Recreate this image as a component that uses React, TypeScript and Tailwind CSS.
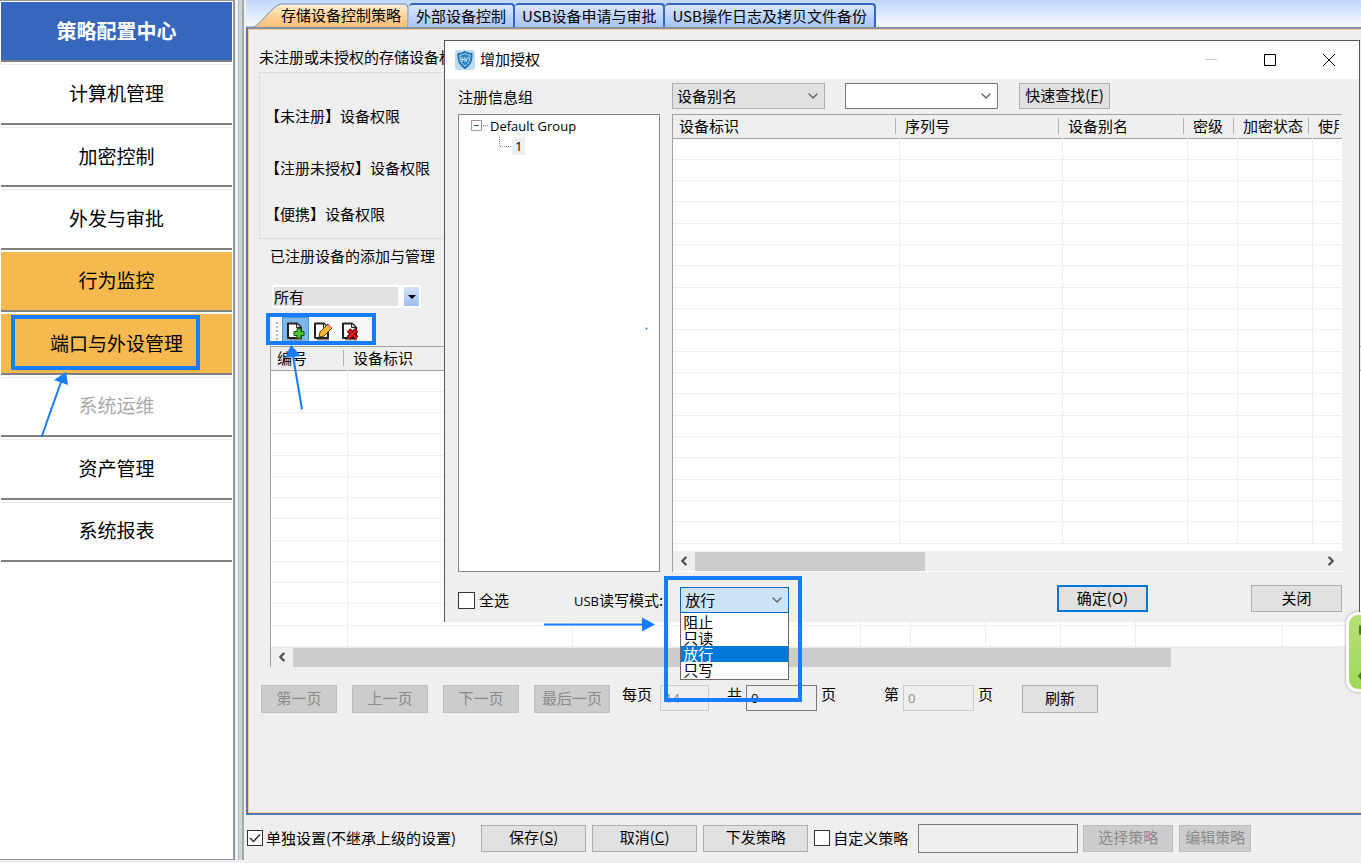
import { useState } from 'react'
import type { ReactNode } from 'react'
import clsx from 'clsx'
import { ChevronDown, ChevronLeft, ChevronRight } from 'lucide-react'

const menu = [
  { label: '计算机管理' },
  { label: '加密控制' },
  { label: '外发与审批' },
  { label: '行为监控', active: true },
  { label: '端口与外设管理', active: true },
  { label: '系统运维', disabled: true },
  { label: '资产管理' },
  { label: '系统报表' },
]

const tabs = ['外部设备控制', 'USB设备申请与审批', 'USB操作日志及拷贝文件备份']

const modes = ['阻止', '只读', '放行', '只写']

interface Column {
  label: string
  width: string
}

const deviceColumns: Column[] = [
  { label: '编号', width: 'w-[76px]' },
  { label: '设备标识', width: 'w-[225px]' },
  { label: '', width: 'w-[288px]' },
  { label: '', width: 'w-[50px]' },
  { label: '', width: 'w-[75px]' },
  { label: '', width: 'w-[75px]' },
  { label: '', width: 'w-[75px]' },
  { label: '', width: 'w-[147px]' },
  { label: '', width: '' },
]

const authColumns: Column[] = [
  { label: '设备标识', width: 'w-[226px]' },
  { label: '序列号', width: 'w-[163px]' },
  { label: '设备别名', width: 'w-[125px]' },
  { label: '密级', width: 'w-[50px]' },
  { label: '加密状态', width: 'w-[75px]' },
  { label: '使用', width: '' },
]

function GridTable({ columns, rows, height, label }: { columns: Column[]; rows: number; height: string; label: string }) {
  return (
    <table aria-label={label} className={clsx('w-full table-fixed border-collapse bg-white', height)}>
      <thead>
        <tr className="h-[23px] border-b border-[#a0a0a0] bg-[#efefef]">
          {columns.map((col, i) => (
            <th key={i} className={clsx('p-0 text-left font-normal', col.width)}>
              <div
                className={clsx(
                  'mr-[3px] h-4 overflow-x-clip pl-[6px] leading-4 whitespace-nowrap',
                  i < columns.length - 1 && 'border-r border-[#b0b0b0]',
                )}
              >
                {col.label}
              </div>
            </th>
          ))}
        </tr>
      </thead>
      <tbody>
        {Array.from({ length: rows }, (_, r) => (
          <tr key={r} className="border-b border-[#ededed]">
            {columns.map((_, c) => (
              <td key={c} className="border-r border-[#ededed] p-0 last:border-r-0" />
            ))}
          </tr>
        ))}
      </tbody>
    </table>
  )
}

function ScrollBar({ thumb, end }: { thumb: string; end?: boolean }) {
  return (
    <div className="flex h-5 items-center bg-[#efefef] text-[#505050]">
      <button aria-label="向左滚动" className="flex w-[22px] justify-center">
        <ChevronLeft className="h-[14px] w-[14px]" strokeWidth={4} />
      </button>
      <div className={clsx('h-[19px] bg-[#cccccc]', thumb)} />
      {end && (
        <button aria-label="向右滚动" className="ml-auto flex w-[22px] justify-center">
          <ChevronRight className="h-[14px] w-[14px]" strokeWidth={4} />
        </button>
      )}
    </div>
  )
}

function Button({ children, className, disabled }: { children: ReactNode; className?: string; disabled?: boolean }) {
  return (
    <button
      disabled={disabled}
      className={clsx(
        'shrink-0 border pb-[2px] text-center leading-[22px] whitespace-nowrap',
        disabled ? 'border-[#bfbfbf] bg-[#cccccc] text-[#8a8a8a]' : 'border-[#adadad] bg-[#e1e1e1]',
        className,
      )}
    >
      {children}
    </button>
  )
}

function Combo({ label, value, className }: { label: string; value: string; className: string }) {
  return (
    <div className="relative">
      <select
        aria-label={label}
        defaultValue={value}
        className={clsx('block h-[26px] appearance-none border pl-1 leading-[22px] outline-none', className)}
      >
        <option>{value}</option>
      </select>
      <ChevronDown className="pointer-events-none absolute top-[5px] right-1 h-4 w-4 text-[#606060]" strokeWidth={2} />
    </div>
  )
}

function PageIcon({ children }: { children: ReactNode }) {
  return (
    <svg viewBox="0 0 20 20" className="h-5 w-5">
      <path d="M4 18.500h12" stroke="#8a8a8a" strokeWidth="2" />
      <path d="M2 2.500h9l4 4v10.500h-13z" fill="#fff" stroke="#222" strokeWidth="2" strokeLinejoin="round" />
      <path d="M10.500 2.500v4h4" fill="#ddd" stroke="#222" />
      {children}
    </svg>
  )
}

function Sidebar() {
  return (
    <aside className="mb-[3px] w-[235px] shrink-0 border-t border-r-2 border-b border-[#8f94a2] bg-white pl-px">
      <ul className="flex h-[561px] flex-col pr-px text-[19px]">
        <li className="flex flex-1 border-b-2 border-[#808080] pt-px">
          <h1 className="flex w-full items-center justify-center bg-[#3766bd] text-xl font-bold text-white">策略配置中心</h1>
        </li>
        {menu.map((item) => (
          <li key={item.label} className="flex flex-1 border-b-2 border-[#808080] pt-[2px]">
            <button
              disabled={item.disabled}
              className={clsx(
                'w-full border-t pb-[2px]',
                item.active ? 'border-[#f5b94f] bg-[#f5b94f]' : 'border-[#ebebeb]',
                item.disabled && 'text-[#aaaaaa]',
              )}
            >
              {item.label}
            </button>
          </li>
        ))}
      </ul>
    </aside>
  )
}

function TabStrip() {
  return (
    <div role="tablist" className="flex h-[27px] items-end bg-linear-to-b from-[#c1d8fc] to-[#f8fbff]">
      <button role="tab" aria-selected="true" className="relative h-6 w-[163px] pl-[35px] text-left leading-6">
        <svg viewBox="0 0 163 24" className="absolute inset-0 h-full w-full">
          <defs>
            <linearGradient id="activeTab" x1="0" y1="0" x2="0" y2="1">
              <stop offset="0" stopColor="#fff0da" />
              <stop offset="0.500" stopColor="#ffd49a" />
              <stop offset="1" stopColor="#fec078" />
            </linearGradient>
          </defs>
          <path d="M0 24h8C13 22 27 4 32 2q2-1 5-1h122q3 0 3 4v19z" fill="url(#activeTab)" />
          <path d="M0 24h8C13 22 27 4 32 2q2-1 5-1h122q3 0 3 4v19" fill="none" stroke="#6c86b5" />
        </svg>
        <span className="relative">存储设备控制策略</span>
      </button>
      {tabs.map((tab) => (
        <button
          key={tab}
          role="tab"
          aria-selected="false"
          className="h-6 rounded-t-[4px] border-2 border-b-0 border-l-0 border-[#3566c4] bg-linear-to-b from-[#d8e6ff] to-[#a6c4f5] px-[7px] pb-px leading-[21px] whitespace-nowrap"
        >
          {tab}
        </button>
      ))}
    </div>
  )
}

function Toolbar() {
  return (
    <div className="ml-[13px] flex h-[27px] w-[100px] items-center bg-[#f8f8f8]">
      <div className="mx-1 h-[18px] border-l-2 border-dotted border-[#b4b4b4]" />
      <button aria-label="添加" className="flex h-[27px] w-[27px] items-center justify-center border border-[#3d9be9] bg-[#7cb7ea]">
        <PageIcon>
          <path d="M11 7.500h4v3h3v4h-3v3h-4v-3H8v-4h3z" fill="#45c22d" stroke="#14520c" />
        </PageIcon>
      </button>
      <button aria-label="编辑" className="flex h-[27px] w-[27px] items-center justify-center">
        <PageIcon>
          <path d="M6 16l1-5 8-8 4 4-8 8z" fill="#fbb829" stroke="#5a3805" />
          <path d="M15 4l3 3" stroke="#e98a8a" strokeWidth="2" />
        </PageIcon>
      </button>
      <button aria-label="删除" className="flex h-[27px] w-[30px] items-center justify-center">
        <PageIcon>
          <path d="M7.500 9l8 8m0-8l-8 8" stroke="#4a0505" strokeWidth="5" />
          <path d="M7.500 9l8 8m0-8l-8 8" stroke="#e01414" strokeWidth="3" />
        </PageIcon>
      </button>
    </div>
  )
}

function Pager() {
  const field = 'h-[26px] border px-1 font-[Open_Sans] text-[13px]'
  return (
    <div className="mt-[18px] ml-[2px] flex items-start leading-[18px]">
      <div className="flex gap-[15px]">
        {['第一页', '上一页', '下一页', '最后一页'].map((text) => (
          <Button key={text} disabled className="h-7 w-[76px]">
            {text}
          </Button>
        ))}
      </div>
      <label htmlFor="pageSize" className="ml-3">每页</label>
      <input id="pageSize" disabled defaultValue="14" className={clsx(field, 'ml-2 w-[49px] border-[#cccccc] text-[#8a8a8a]')} />
      <label htmlFor="pageTotal" className="ml-[18px]">共</label>
      <input id="pageTotal" readOnly defaultValue="0" className={clsx(field, 'ml-1 w-[71px] border-[#7a7a7a]')} />
      <span className="ml-1">页</span>
      <label htmlFor="pageNumber" className="ml-12">第</label>
      <input id="pageNumber" disabled defaultValue="0" className={clsx(field, 'ml-1 w-[71px] border-[#cccccc] text-[#8a8a8a]')} />
      <span className="ml-1">页</span>
      <Button className="ml-[29px] h-7 w-[76px]">刷新</Button>
    </div>
  )
}

function Footer() {
  return (
    <footer className="flex h-12 shrink-0 items-center pb-[2px]">
      <label className="flex items-center gap-[3px] whitespace-nowrap">
        <span className="relative ml-px flex">
          <input type="checkbox" defaultChecked className="peer h-4 w-4 appearance-none border border-[#333] bg-white" />
          <svg viewBox="0 0 16 16" className="pointer-events-none absolute inset-0 hidden h-4 w-4 peer-checked:block">
            <path d="M3 8l3.500 3.500L13 4.500" fill="none" stroke="#333" strokeWidth="1.500" />
          </svg>
        </span>
        单独设置(不继承上级的设置)
      </label>
      <div className="ml-[25px] flex gap-[6px]">
        <Button className="h-[27px] w-[105px]">保存(<u>S</u>)</Button>
        <Button className="h-[27px] w-[105px]">取消(<u>C</u>)</Button>
        <Button className="h-[27px] w-[105px]">下发策略</Button>
      </div>
      <label className="ml-[6px] flex items-center gap-[3px] whitespace-nowrap">
        <input type="checkbox" className="h-4 w-4 appearance-none border border-[#333] bg-white" />
        自定义策略
      </label>
      <input aria-label="自定义策略名称" readOnly className="mr-[5px] ml-[10px] h-[29px] w-[160px] border border-[#7a7a7a]" />
      <Button disabled className="mr-[6px] h-[27px] w-[90px]">选择策略</Button>
      <Button disabled className="h-[27px] w-[72px]">编辑策略</Button>
    </footer>
  )
}

function GroupTree() {
  return (
    <ul className="h-[458px] border border-[#828790] bg-white pt-[2px] pl-3 font-[Open_Sans] text-[13px] leading-[18px]">
      <li>
        <div className="flex items-center gap-px">
          <svg viewBox="0 0 18 12" className="h-3 w-[18px]">
            <path d="M0.500 0.500h10v10h-10z" fill="#fff" stroke="#999" />
            <path d="M3 5.500h5" stroke="#3a5a9a" />
            <path d="M12 5.500h5" stroke="#888" strokeDasharray="1 1" />
          </svg>
          Default Group
        </div>
        <ul>
          <li className="flex items-center pt-[2px] pl-[28px]">
            <svg viewBox="0 0 13 18" className="h-[18px] w-[13px]">
              <path d="M0.500 0v9.500H12" fill="none" stroke="#888" strokeDasharray="1 1" />
            </svg>
            <span className="bg-[#efefef] px-[3px]">1</span>
          </li>
        </ul>
      </li>
    </ul>
  )
}

function ModeSelect({ value, onChange }: { value: string; onChange: (mode: string) => void }) {
  return (
    <div className="relative ml-[17px]">
      <select
        id="usbMode"
        value={value}
        onChange={(e) => onChange(e.target.value)}
        className="block h-[26px] w-[109px] appearance-none border border-[#0067b8] bg-[#cce4f7] pl-1 outline-none"
      >
        {modes.map((mode) => (
          <option key={mode}>{mode}</option>
        ))}
      </select>
      <ChevronDown className="pointer-events-none absolute top-[5px] right-1 h-4 w-4 text-[#606060]" strokeWidth={2} />
      <ul role="listbox" aria-label="USB读写模式" className="absolute top-[26px] left-0 w-[109px] border border-t-0 border-[#6a6a6a] bg-white pt-px pb-px">
        {modes.map((mode) => (
          <li
            key={mode}
            role="option"
            aria-selected={mode === value}
            onClick={() => onChange(mode)}
            className={clsx('h-4 pl-[2px] leading-4', mode === value && 'bg-[#0078d7] text-white')}
          >
            {mode}
          </li>
        ))}
      </ul>
    </div>
  )
}

function AuthDialog() {
  const [mode, setMode] = useState('放行')

  return (
    <section role="dialog" aria-label="增加授权" className="absolute top-10 right-px left-[444px] border border-b-0 border-[#555] bg-[#efefef]">
      <header className="flex h-[38px] items-center bg-white pl-[10px]">
        <svg viewBox="0 0 20 20" className="h-5 w-5">
          <rect width="20" height="20" rx="3" fill="#b9dcf2" />
          <path d="M10 1.500c2.500 1.500 5 2 7 2 .3 7-1.500 12-7 15-5.500-3-7.300-8-7-15 2 0 4.500-.5 7-2z" fill="#2b83c4" stroke="#1f62a5" />
          <path d="M10 3.500c1.800 1 3.500 1.400 5 1.500 0 5-1.200 8.700-5 11-3.800-2.300-5-6-5-11 1.500-.1 3.200-.5 5-1.500z" fill="none" stroke="#a9d8f5" />
          <path d="M7 7v5M7 9.500h3M10 7v5M14 7.500q-3 0-2.500 4" fill="none" stroke="#d9effc" />
        </svg>
        <h2 className="ml-[5px] pb-[2px]">增加授权</h2>
        <div className="mr-[23px] ml-auto flex gap-[45px]">
          <button aria-label="最小化" disabled>
            <svg viewBox="0 0 14 14" className="h-[14px] w-[14px]"><path d="M1 6.500h12" stroke="#ccc" /></svg>
          </button>
          <button aria-label="最大化">
            <svg viewBox="0 0 14 14" className="h-[14px] w-[14px]"><path d="M1.500 1.500h11v11h-11z" fill="none" stroke="#000" /></svg>
          </button>
          <button aria-label="关闭窗口">
            <svg viewBox="0 0 14 14" className="h-[14px] w-[14px]"><path d="M1 1l12 12M13 1L1 13" stroke="#000" /></svg>
          </button>
        </div>
      </header>

      <div className="flex gap-3 pt-1 pr-[17px] pl-[13px]">
        <div className="flex w-[202px] shrink-0 flex-col gap-[5px]">
          <h3 className="h-[26px] leading-[28px]">注册信息组</h3>
          <GroupTree />
        </div>
        <div className="flex min-w-0 flex-1 flex-col gap-[5px]">
          <div className="flex">
            <Combo label="查找字段" value="设备别名" className="w-[153px] border-[#adadad] bg-[#e1e1e1]" />
            <div className="ml-5">
              <Combo label="查找内容" value="" className="w-[153px] border-[#7a7a7a] bg-white" />
            </div>
            <Button className="ml-[21px] h-[26px] w-[91px]">快速查找(<u>F</u>)</Button>
          </div>
          <div className="flex h-[458px] flex-col border-t border-l border-[#a0a0a0] bg-white">
            <GridTable label="注册设备" columns={authColumns} rows={19} height="h-[429px]" />
            <div className="mt-auto border-b border-white">
              <ScrollBar thumb="w-[230px]" end />
            </div>
          </div>
        </div>
      </div>

      <div className="mt-[13px] flex h-[37px] items-start pr-[17px] pl-[13px]">
        <label className="mt-[2px] flex h-[26px] items-center gap-1 whitespace-nowrap">
          <input type="checkbox" className="h-[17px] w-[17px] appearance-none border border-[#333] bg-white" />
          全选
        </label>
        <div className="mt-[2px] ml-[65px] flex items-center">
          <label htmlFor="usbMode" className="whitespace-nowrap">
            <span className="font-[Open_Sans] text-[13px]">USB</span>读写模式:
          </label>
          <ModeSelect value={mode} onChange={setMode} />
        </div>
        <Button className="ml-auto h-[27px] w-[91px] border-2 border-[#0078d7]!">确定(O)</Button>
        <Button className="ml-[103px] h-[27px] w-[91px]">关闭</Button>
      </div>
    </section>
  )
}

// Blue call-outs drawn over the whole window
function Annotations() {
  return (
    <svg width="900" height="720" className="pointer-events-none absolute top-0 left-0" fill="none" stroke="#167dff">
      <rect x="13" y="317" width="185" height="51" strokeWidth="4" />
      <rect x="268" y="315" width="106" height="28" strokeWidth="4" />
      <rect x="666" y="578" width="134" height="122" strokeWidth="4" />
      <path d="M41.500 437L61 382M302 409.500L293 356M544 624.500h100" strokeWidth="2" />
      <path d="M66 372l2 13-14-5zM291 345l10 11-16 2zM655 624.500l-13 7v-14z" fill="#167dff" stroke="none" />
      <circle cx="646.500" cy="328.500" r="1" fill="#167dff" stroke="none" />
    </svg>
  )
}

function FloatingBall() {
  return (
    <div className="absolute top-[612px] right-0 h-20 w-[15px] overflow-hidden rounded-l-[12px] border-3 border-r-0 border-white bg-linear-to-b from-[#b5e077] to-[#9fd857] shadow-[0_0_3px_#888]">
      <svg viewBox="0 0 12 74" className="h-[74px] w-3">
        <path d="M10 10.500h3v9h-3zM12 57l-3 4 3 4z" fill="#3f7d1c" />
      </svg>
    </div>
  )
}

export default function App() {
  return (
    <div className="relative flex h-screen min-h-[863px] min-w-[1300px] overflow-hidden bg-[#efefef] font-['Noto_Sans_CJK_SC',sans-serif] text-[15px] leading-[22px] text-black">
      <Sidebar />
      <div className="mr-[2px] mb-[3px] ml-[3px] w-[6px] shrink-0 border-r-2 border-l border-r-[#a3a8a8] border-l-[#b7bcbc] bg-[#cbd5d5]" />

      <main className="flex min-w-0 flex-1 flex-col">
        <TabStrip />
        <div className="flex-1 border-t-2 border-b-2 border-l-2 border-t-[#8391ab] border-b-[#5577b0] border-l-[#5577b0]">
          <div className="h-full border-t border-b border-l border-[#fbc98c] pl-[10px]">
            <p className="pt-4">未注册或未授权的存储设备权限</p>
            <div className="mt-1 h-[167px] border border-r-0 border-[#dedede] pt-8 pl-[5px]">
              <p>【未注册】设备权限</p>
              <p className="mt-[30px]">【注册未授权】设备权限</p>
              <p className="mt-6">【便携】设备权限</p>
            </div>
            <h2 className="mt-[6px] ml-[11px]">已注册设备的添加与管理</h2>
            <div className="relative mt-[18px] mb-[9px] ml-[13px] w-[149px] border-2 border-white bg-white">
              <select aria-label="设备范围" defaultValue="所有" className="block h-[19px] w-[124px] appearance-none bg-[#e1e1e1] leading-[19px] outline-none">
                <option>所有</option>
              </select>
              <div className="pointer-events-none absolute top-0 right-0 flex h-[19px] w-[15px] items-center justify-center bg-linear-to-b from-[#d6e4fb] to-[#9dbdee]">
                <svg viewBox="0 0 8 4" className="h-1 w-2"><path d="M0 0h8L4 4z" /></svg>
              </div>
            </div>
            <Toolbar />
            <div className="mt-[2px] ml-[11px] border-t border-l border-[#a0a0a0] bg-white">
              <GridTable label="已注册设备" columns={deviceColumns} rows={13} height="h-[300px]" />
              <ScrollBar thumb="w-[878px]" />
            </div>
            <Pager />
          </div>
        </div>
        <Footer />
      </main>

      <AuthDialog />
      <Annotations />
      <FloatingBall />
    </div>
  )
}
